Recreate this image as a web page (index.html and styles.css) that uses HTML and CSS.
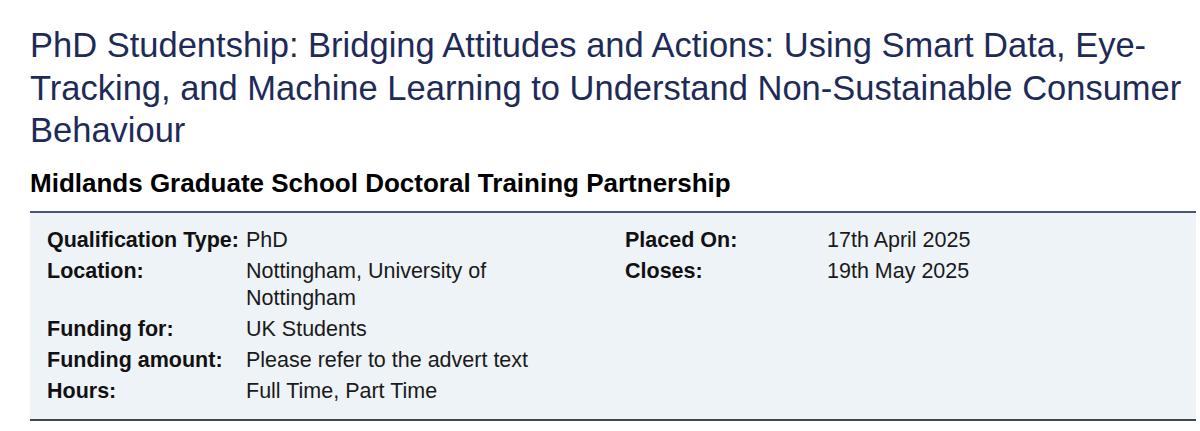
FILE: index.html
```html
<!DOCTYPE html>
<html lang="en">
<head>
<meta charset="utf-8">
<title>PhD Studentship</title>
<link rel="stylesheet" href="styles.css">
</head>
<body>
<div class="job">
    <h1 class="job-title">PhD Studentship: Bridging Attitudes and Actions: Using Smart Data, Eye-Tracking, and Machine Learning to Understand Non-Sustainable Consumer Behaviour</h1>
    <h3 class="employer">Midlands Graduate School Doctoral Training Partnership</h3>

    <div class="job-info">
        <dl class="info-list">
            <dt>Qualification Type:</dt>
            <dd>PhD</dd>
            <dt>Location:</dt>
            <dd>Nottingham, University of Nottingham</dd>
            <dt>Funding for:</dt>
            <dd>UK Students</dd>
            <dt>Funding amount:</dt>
            <dd>Please refer to the advert text</dd>
            <dt>Hours:</dt>
            <dd>Full Time, Part Time</dd>
        </dl>
        <dl class="info-list info-dates">
            <dt>Placed On:</dt>
            <dd>17th April 2025</dd>
            <dt>Closes:</dt>
            <dd>19th May 2025</dd>
        </dl>
    </div>
</div>
</body>
</html>
```

FILE: styles.css
```css
* { margin: 0; padding: 0; }
body { font-family: "Liberation Sans", Arial, Helvetica, sans-serif; color: #111; background: #fff; }

.job { padding: 24px 4px 0 30px; }

.job-title { font-size: 34.5px; font-weight: normal; line-height: 42.5px; color: #1e2b58; }
.employer { font-size: 26px; font-weight: bold; line-height: 32px; color: #000; margin-top: 15px; }

.job-info {
    margin-top: 12px;
    background: #eef3f8;
    border-top: 2px solid #4b5573;
    border-bottom: 2px solid #3e4752;
    padding: 12px 17px;
    display: grid;
    grid-template-columns: 578px 1fr;
}

.info-list { display: grid; grid-template-columns: 199px 320px; align-content: start; font-size: 21.5px; line-height: 27px; }
.info-dates { grid-template-columns: 202px 1fr; }
.info-list dt { font-weight: bold; color: #111; padding: 2px 0; }
.info-list dd { color: #1a1a1a; padding: 2px 0; }
```
